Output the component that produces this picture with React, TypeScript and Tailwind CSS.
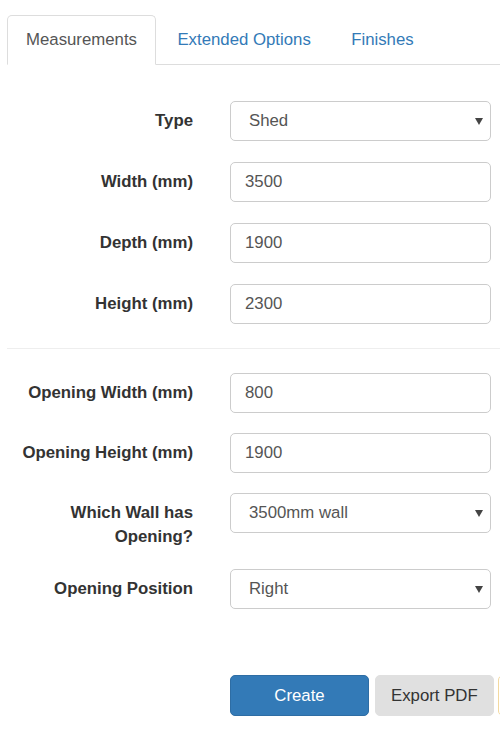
import React from "react";

const Arrow = () => (
  <svg
    className="pointer-events-none absolute right-[8px] top-[17px]"
    width="8"
    height="7"
    viewBox="0 0 8 7"
  >
    <path d="M0 0 H8 L4 7 Z" fill="#444" />
  </svg>
);

function TextRow({ label, value }: { label: React.ReactNode; value: string }) {
  return (
    <div className="flex items-start">
      <label className="w-[193px] shrink-0 pt-[8px] text-right font-bold leading-[24px] text-[#333]">
        {label}
      </label>
      <input
        readOnly
        defaultValue={value}
        className="ml-[37px] h-[40px] w-[261px] rounded-[5px] border border-[#ccc] bg-white pl-[14px] text-[#555] leading-[24px] outline-none"
      />
    </div>
  );
}

function SelectRow({ label, value }: { label: React.ReactNode; value: string }) {
  return (
    <div className="flex items-start">
      <label className="w-[193px] shrink-0 pt-[8px] text-right font-bold leading-[24px] text-[#333]">
        {label}
      </label>
      <div className="relative ml-[37px] w-[261px]">
        <select
          defaultValue={value}
          className="h-[40px] w-full appearance-none rounded-[5px] border border-[#ccc] bg-white pl-[18px] text-[#555] leading-[24px] outline-none"
        >
          <option>{value}</option>
        </select>
        <Arrow />
      </div>
    </div>
  );
}

export default function App() {
  return (
    <div
      className="relative h-[743px] w-[500px] overflow-hidden bg-white pt-[15px] text-[16.8px]"
      style={{ fontFamily: '"Liberation Sans", Arial, sans-serif' }}
    >
      <div className="ml-[7px] flex border-b border-[#ddd]">
        <div className="-mb-px mr-[2.4px] rounded-t-[5px] border border-[#ddd] border-b-white bg-white px-[18px] py-[12px] leading-[24px] text-[#555]">
          Measurements
        </div>
        <div className="-mb-px mr-[2.4px] rounded-t-[5px] border border-transparent px-[18px] py-[12px] leading-[24px] text-[#337ab7]">
          Extended Options
        </div>
        <div className="-mb-px mr-[2.4px] rounded-t-[5px] border border-transparent px-[18px] py-[12px] leading-[24px] text-[#337ab7]">
          Finishes
        </div>
      </div>

      <div className="mt-[36px] flex flex-col gap-[21px]">
        <SelectRow label="Type" value="Shed" />
        <TextRow label="Width (mm)" value="3500" />
        <TextRow label="Depth (mm)" value="1900" />
        <TextRow label="Height (mm)" value="2300" />
      </div>

      <div className="ml-[7px] mt-[24px] border-t border-[#eee]" />

      <div className="mt-[24px] flex flex-col gap-[20px]">
        <TextRow label="Opening Width (mm)" value="800" />
        <TextRow label="Opening Height (mm)" value="1900" />
        <SelectRow
          label={
            <>
              Which Wall has
              <br />
              Opening?
            </>
          }
          value="3500mm wall"
        />
        <SelectRow label="Opening Position" value="Right" />
      </div>

      <div className="ml-[230px] mt-[66px] flex items-start">
        <button className="h-[41px] w-[139px] shrink-0 rounded-[5px] border border-[#2e6da4] bg-[#337ab7] text-center leading-[24px] text-white">
          Create
        </button>
        <button className="ml-[6px] h-[41px] shrink-0 whitespace-nowrap rounded-[5px] border border-[#e0e0e0] bg-[#e0e0e0] px-[15px] leading-[24px] text-[#333]">
          Export PDF
        </button>
        <button className="ml-[4px] h-[41px] w-[40px] shrink-0 rounded-[5px] border border-[#f3d9a0] bg-white" />
      </div>
    </div>
  );
}
